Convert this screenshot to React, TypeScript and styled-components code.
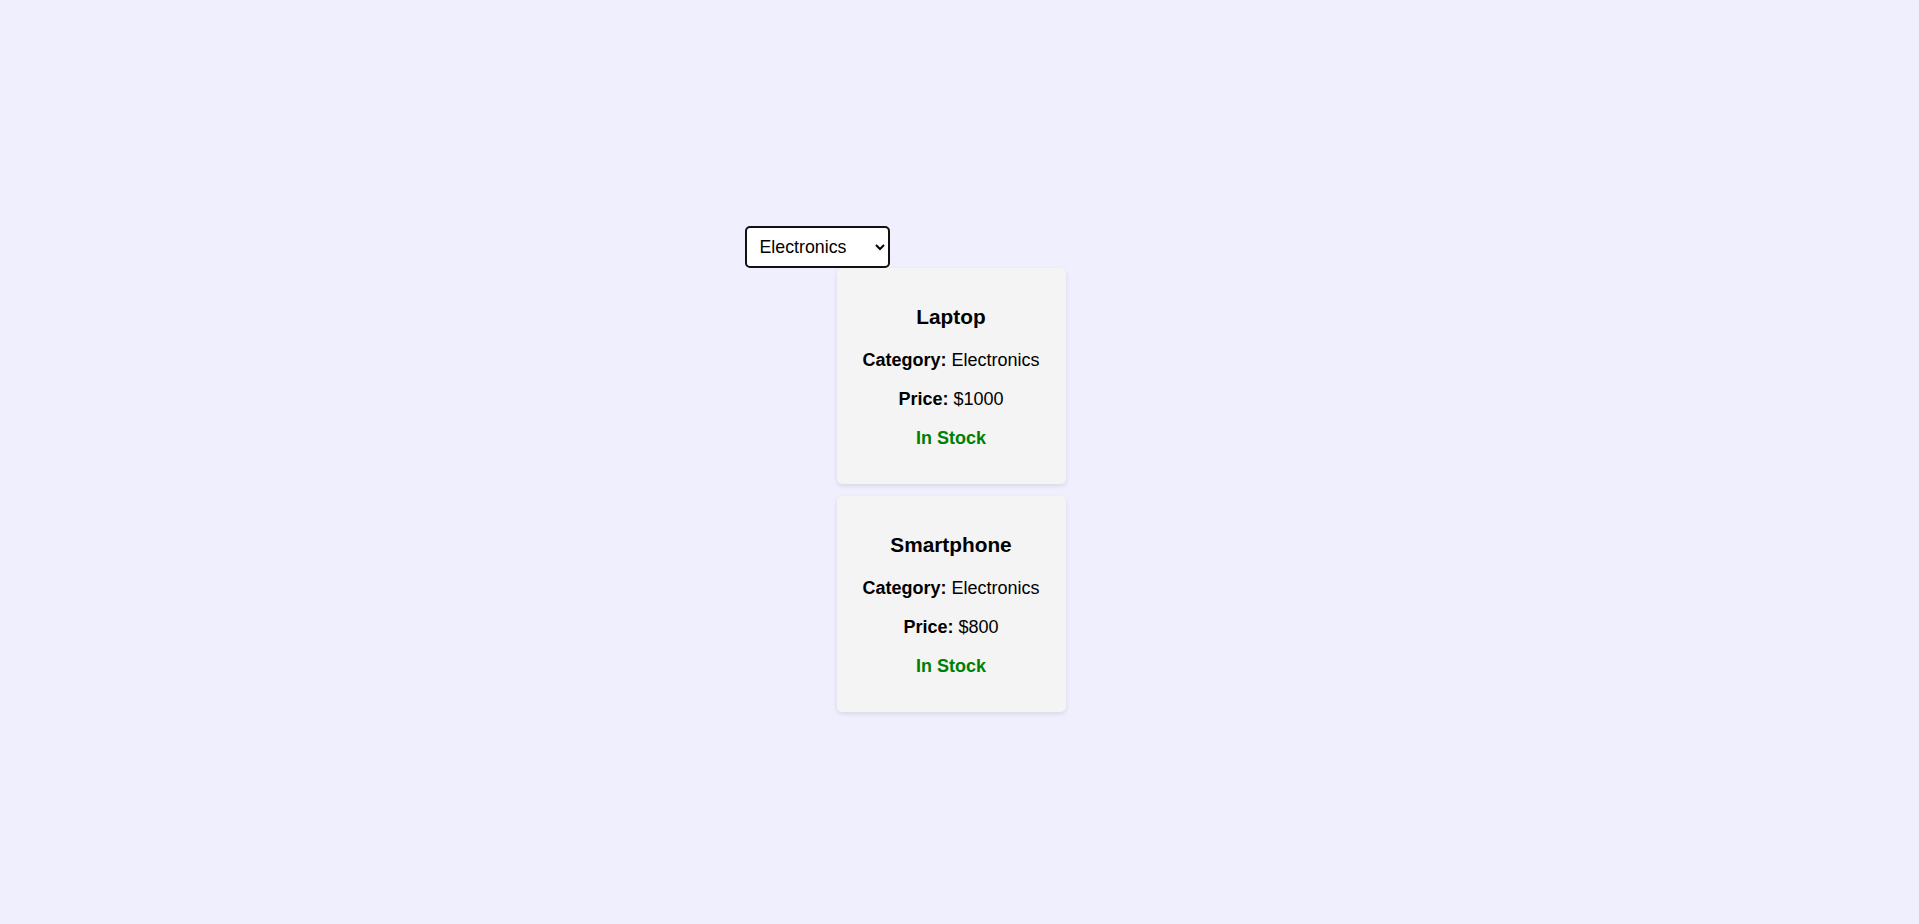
import { useState } from 'react';
import styled, { createGlobalStyle } from 'styled-components';

type Product = {
  id: number;
  name: string;
  category: string;
  price: number;
  inStock: boolean;
};

const products: Product[] = [
  { id: 1, name: 'Laptop', category: 'Electronics', price: 1000, inStock: true },
  { id: 2, name: 'Smartphone', category: 'Electronics', price: 800, inStock: true },
  { id: 3, name: 'T-Shirt', category: 'Clothing', price: 25, inStock: false },
  { id: 4, name: 'Novel', category: 'Books', price: 15, inStock: true },
];

const categories = ['Electronics', 'Clothing', 'Books'];

function App() {
  const [category, setCategory] = useState('Electronics');
  const filtered = products.filter((p) => p.category === category);

  return (
    <>
      <GlobalStyle />
      <Page>
        <Wrapper>
          <Select value={category} onChange={(e) => setCategory(e.target.value)}>
            {categories.map((c) => (
              <option key={c} value={c}>
                {c}
              </option>
            ))}
          </Select>
          <List>
            {filtered.map((p) => (
              <Card key={p.id}>
                <Title>{p.name}</Title>
                <Line>
                  <strong>Category:</strong> {p.category}
                </Line>
                <Line>
                  <strong>Price:</strong> ${p.price}
                </Line>
                <Stock $inStock={p.inStock}>{p.inStock ? 'In Stock' : 'Out of Stock'}</Stock>
              </Card>
            ))}
          </List>
        </Wrapper>
      </Page>
    </>
  );
}

export default App;

const GlobalStyle = createGlobalStyle`
  html, body {
    background: #efeffd;
  }
  body {
    margin: 8px;
    font-family: "Liberation Sans", Arial, sans-serif;
    color: #000;
  }
`;

// right padding stands in for the scrollbar gutter of the original window
const Page = styled.div`
  min-height: calc(100vh - 2px);
  padding-right: 17px;
  display: flex;
  justify-content: center;
  align-items: center;
`;

const Wrapper = styled.div`
  width: 413px;
  display: flex;
  flex-direction: column;
`;

const Select = styled.select`
  align-self: flex-start;
  width: 145px;
  height: 42px;
  padding: 0 8px 0 9px;
  font-family: "Liberation Sans", Arial, sans-serif;
  font-size: 17.8px;
  color: #000;
  background: #fff;
  border: 2px solid #111;
  border-radius: 5px;
  box-sizing: border-box;
`;

const List = styled.div`
  display: flex;
  flex-direction: column;
  align-items: center;
  gap: 12px;
`;

const Card = styled.div`
  width: 229px;
  box-sizing: border-box;
  padding: 17px 20px 18px;
  background: #f4f4f4;
  border-radius: 5px;
  box-shadow: 0 2px 5px rgba(0, 0, 0, 0.1);
  text-align: center;
`;

const Title = styled.h3`
  margin: 20px 0;
  font-size: 20.8px;
  line-height: 24px;
  font-weight: 700;
`;

const Line = styled.p`
  margin: 16px 0;
  font-size: 18px;
  line-height: 23px;
  white-space: nowrap;
`;

const Stock = styled(Line)<{ $inStock: boolean }>`
  font-weight: 700;
  color: ${({ $inStock }) => ($inStock ? '#008000' : '#cc0000')};
`;
